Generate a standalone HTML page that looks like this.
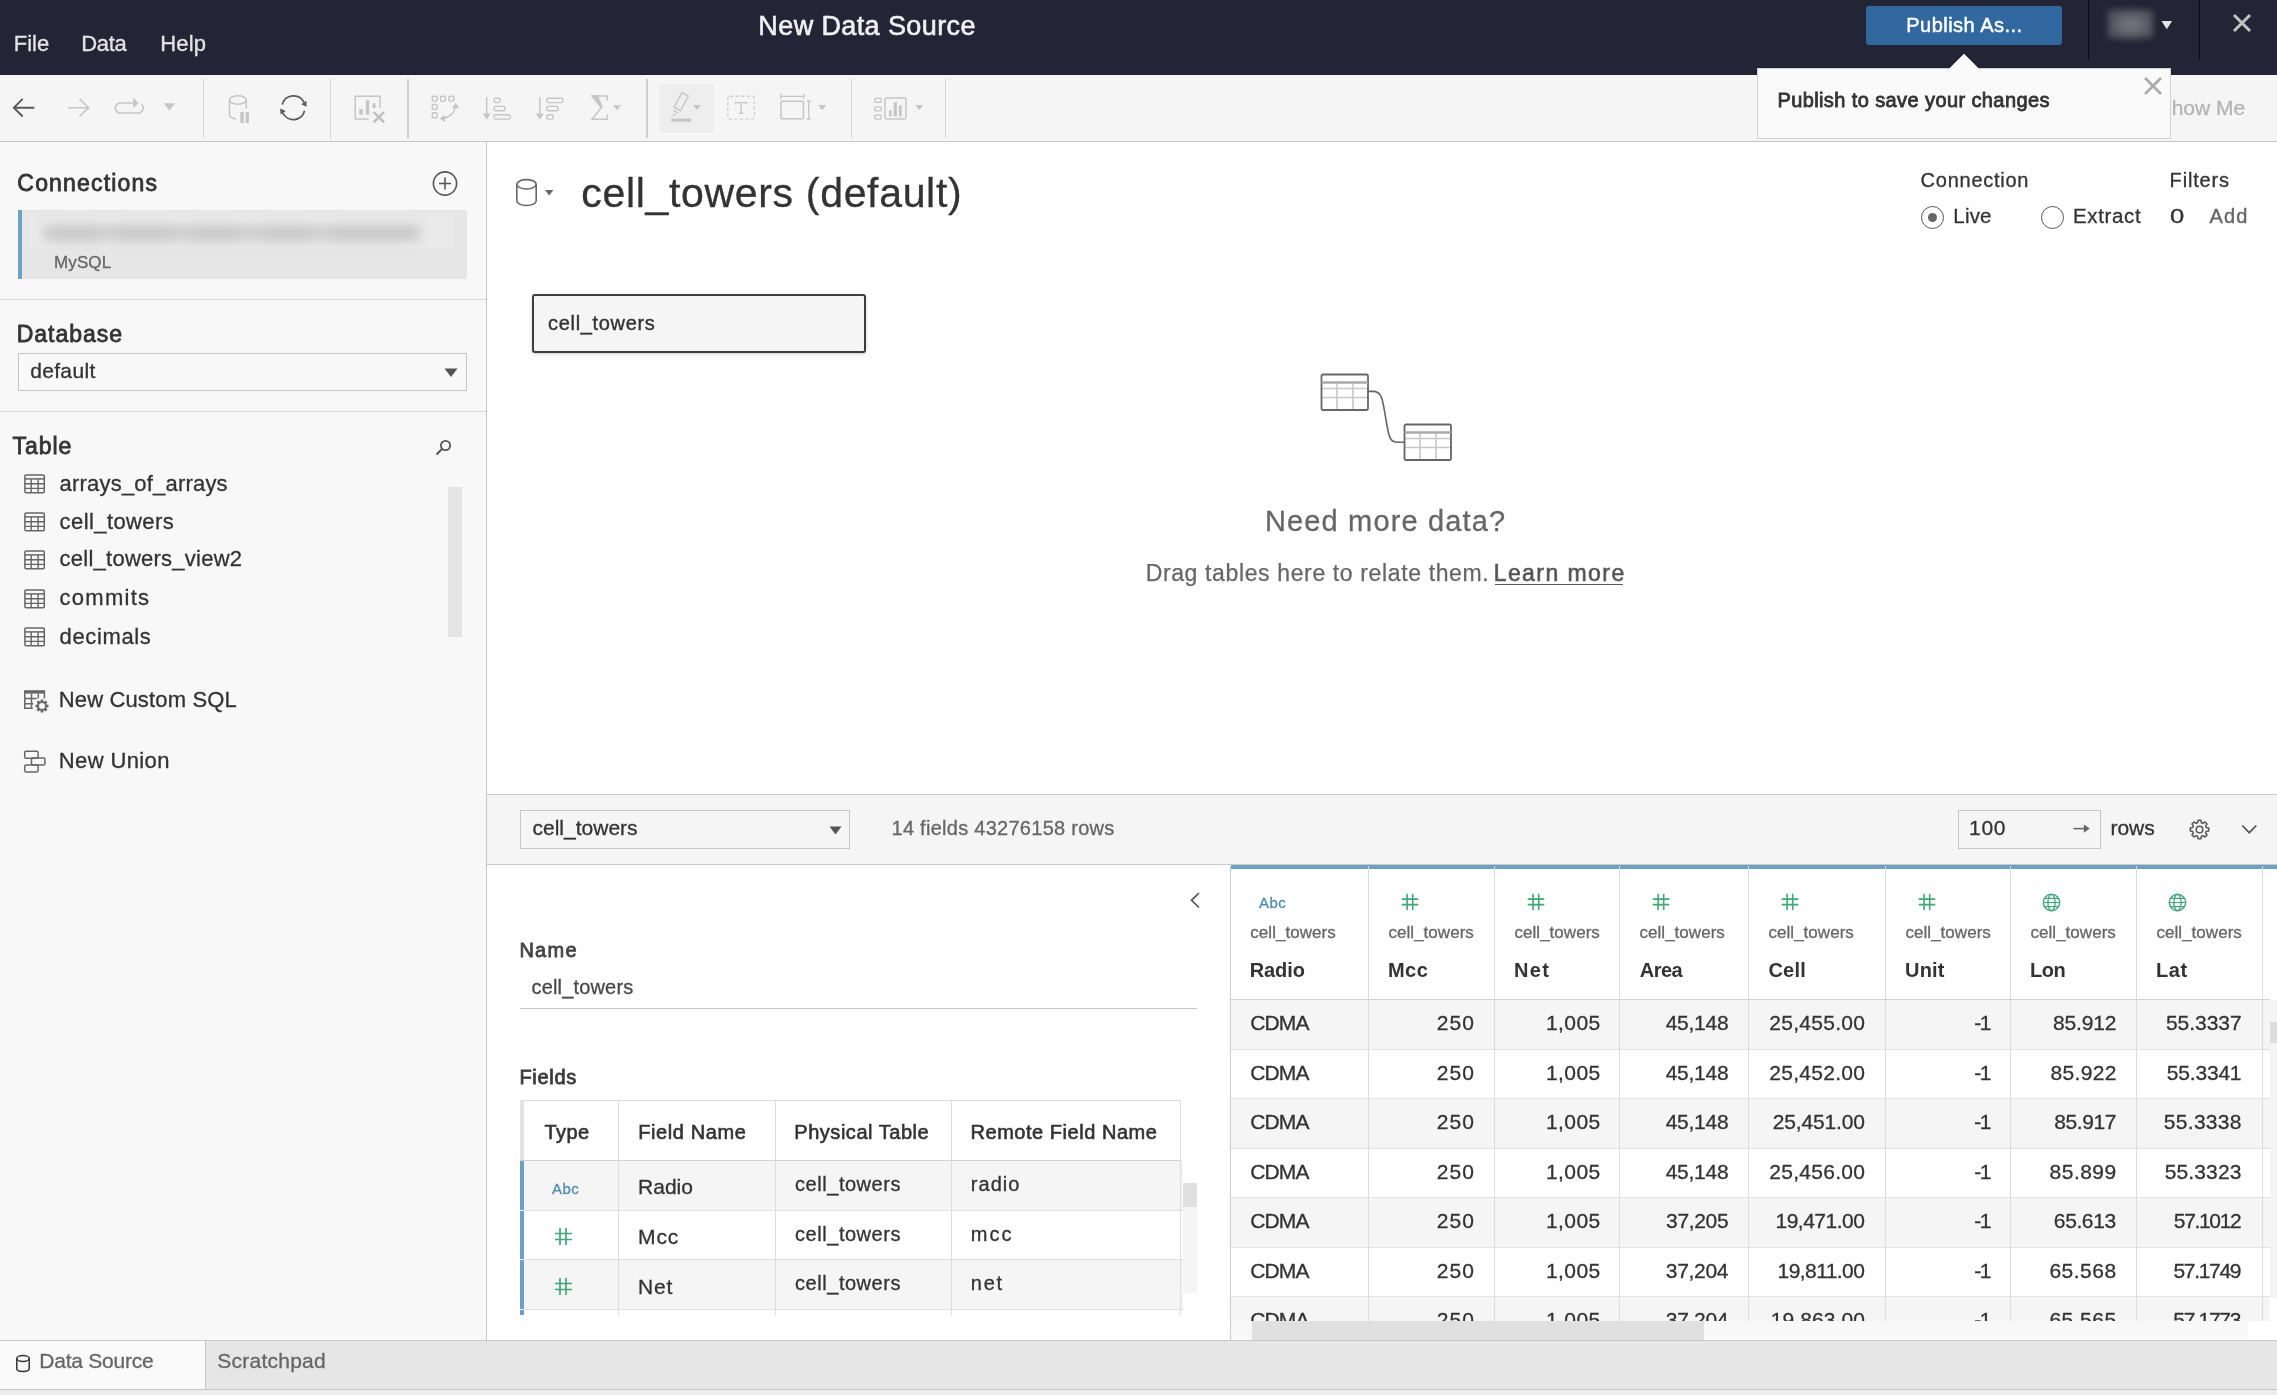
<!DOCTYPE html>
<html lang="en"><head><meta charset="utf-8"><title>New Data Source</title>
<style>
html,body{margin:0;padding:0;}
body{width:2277px;height:1395px;position:relative;overflow:hidden;background:#fff;font-family:"Liberation Sans",sans-serif;color:#333;}
.t{position:absolute;white-space:nowrap;line-height:1;}
#w{position:absolute;left:0;top:0;width:2277px;height:1395px;will-change:transform;}
.b{position:absolute;box-sizing:border-box;}
</style></head><body><div id="w">
<div class="b" style="left:0px;top:0px;width:2277px;height:75px;background:#232536;"></div>
<div class="b" style="left:0px;top:75px;width:2277px;height:66px;background:#f5f5f5;"></div>
<div class="b" style="left:0px;top:141px;width:2277px;height:1px;background:#c6c6c6;"></div>
<div class="b" style="left:0px;top:142px;width:486px;height:1198px;background:#f8f8f8;"></div>
<div class="b" style="left:486px;top:142px;width:1px;height:1198px;background:#c4c4c4;"></div>
<span class="t" style="left:13.74px;top:33px;font-size:22px;color:#e4e4e4;letter-spacing:-0.023px;-webkit-text-stroke:0.3px #e4e4e4;">File</span>
<span class="t" style="left:81.24px;top:33px;font-size:22px;color:#e4e4e4;letter-spacing:-0.320px;-webkit-text-stroke:0.3px #e4e4e4;">Data</span>
<span class="t" style="left:160.24px;top:33px;font-size:22px;color:#e4e4e4;letter-spacing:0.177px;-webkit-text-stroke:0.3px #e4e4e4;">Help</span>
<span class="t" style="left:758.34px;top:13px;font-size:27px;color:#f0f0f0;letter-spacing:0.395px;-webkit-text-stroke:0.6px #f0f0f0;">New Data Source</span>
<div class="b" style="left:1866px;top:6px;width:196px;height:39px;background:#31689f;border-radius:3px;"></div>
<span class="t" style="left:1906.20px;top:15px;font-size:20px;color:#fff;letter-spacing:0.492px;-webkit-text-stroke:0.5px #fff;">Publish As...</span>
<div class="b" style="left:2088px;top:0px;width:1.300000000000182px;height:59px;background:#0b0c12;"></div>
<div class="b" style="left:2199px;top:0px;width:1.300000000000182px;height:59px;background:#0b0c12;"></div>
<div class="b" style="left:2108px;top:10px;width:45px;height:28px;background:#4f505c;filter:blur(3px);border-radius:2px;"></div>
<div class="b" style="left:2116px;top:16px;width:30px;height:17px;background:#74757f;filter:blur(6px);border-radius:8px;"></div>
<svg class="b" style="left:2161px;top:20px;" width="12" height="10" viewBox="0 0 12 10" fill="none"><path d="M0.5 1h10.6L5.8 9.2z" fill="#e4e4e4"/></svg>
<svg class="b" style="left:2231px;top:12px;" width="22" height="22" viewBox="0 0 22 22" fill="none"><path d="M3 3L19 19M19 3L3 19" stroke="#c2c2c2" stroke-width="3"/></svg>
<div class="b" style="left:203px;top:79px;width:1px;height:59px;background:#d4d4d4;"></div>
<div class="b" style="left:330px;top:79px;width:1px;height:59px;background:#d4d4d4;"></div>
<div class="b" style="left:407px;top:79px;width:2px;height:59px;background:#d0d0d0;"></div>
<div class="b" style="left:646px;top:79px;width:2px;height:59px;background:#d0d0d0;"></div>
<div class="b" style="left:851px;top:79px;width:1px;height:59px;background:#d4d4d4;"></div>
<div class="b" style="left:945px;top:79px;width:1px;height:59px;background:#d4d4d4;"></div>
<div class="b" style="left:659px;top:84px;width:55px;height:49px;background:#eeeeee;border-radius:2px;"></div>
<svg class="b" style="left:0px;top:75px;" width="960" height="66" viewBox="0 75 960 66" fill="none"><path d="M34.3 107.7H14M22.7 98.9L13.8 107.7L22.7 116.5" stroke="#5a5a5a" stroke-width="1.9"/><path d="M68 107.7H88.5M79.5 98.9L88.6 107.7L79.5 116.5" stroke="#c6c6c6" stroke-width="1.6"/><path d="M133 102.9H120.5a5.1 5.1 0 0 0 0 10.2H138a5.2 5.2 0 0 0 3.6-9" stroke="#c6c6c6" stroke-width="1.5"/><path d="M133.2 97.6L138.6 102.9L133.2 108.2z" fill="#c6c6c6"/><path d="M163.8 103.3H175L169.4 110.7z" fill="#c6c6c6"/><ellipse cx="237.9" cy="100" rx="8.4" ry="4.2" stroke="#c6c6c6" stroke-width="1.5"/><path d="M229.5 100v14.6c0 2.2 2.6 3.8 6.5 4.4M246.3 100v8.5" stroke="#c6c6c6" stroke-width="1.5"/><path d="M240.3 112h3.5v11h-3.5zM245.6 112h3.3v11h-3.3z" fill="#c6c6c6"/><path d="M282.3 104.6A11.6 11.6 0 0 1 304 102.5" stroke="#5a5a5a" stroke-width="1.7"/><path d="M304.6 110.8A11.6 11.6 0 0 1 282.8 112.9" stroke="#5a5a5a" stroke-width="1.7"/><path d="M306.3 100.8L306.6 106.8L301.2 104.2z" fill="#5a5a5a"/><path d="M280.6 114.5L280.2 108.4L285.8 111z" fill="#5a5a5a"/><path d="M380 108V96.3H355.2v22.6h13.5" stroke="#c6c6c6" stroke-width="1.5"/><path d="M359.3 109h3.5v5.7h-3.5zM365.9 100.2h3.3v14.5h-3.3zM372.5 103.3h3.1v4.8h-3.1z" fill="#c6c6c6"/><path d="M373.6 112l10.5 10.3M384.1 112L373.6 122.3" stroke="#bdbdbd" stroke-width="2.4"/><rect x="432.20000000000005" y="96.19999999999999" width="4.9" height="4.9" rx="1.2" stroke="#c6c6c6" stroke-width="1.4"/><rect x="440.5" y="96.19999999999999" width="4.9" height="4.9" rx="1.2" stroke="#c6c6c6" stroke-width="1.4"/><rect x="448.90000000000003" y="96.19999999999999" width="4.9" height="4.9" rx="1.2" stroke="#c6c6c6" stroke-width="1.4"/><rect x="432.20000000000005" y="104.5" width="4.9" height="4.9" rx="1.2" stroke="#c6c6c6" stroke-width="1.4"/><rect x="432.20000000000005" y="112.8" width="4.9" height="4.9" rx="1.2" stroke="#c6c6c6" stroke-width="1.4"/><path d="M455.4 106.5C454.5 113 449.5 117.5 443.5 118.2" stroke="#c6c6c6" stroke-width="1.5"/><path d="M455.6 102.8L459.3 108.3L452 108z" fill="#c6c6c6"/><path d="M439.6 118.6L444.8 115L444.9 122.3z" fill="#c6c6c6"/><path d="M486.7 96.9V114" stroke="#c6c6c6" stroke-width="1.5"/><path d="M482.7 113.6h8L486.7 119.8z" fill="#c6c6c6"/><rect x="494.09999999999997" y="98.2" width="6.0" height="4.4" rx="1.6" stroke="#c6c6c6" stroke-width="1.4"/><rect x="494.09999999999997" y="106.4" width="10.799999999999999" height="4.4" rx="1.6" stroke="#c6c6c6" stroke-width="1.4"/><rect x="494.09999999999997" y="114.7" width="16.1" height="4.4" rx="1.6" stroke="#c6c6c6" stroke-width="1.4"/><path d="M539.8 96.9V114" stroke="#c6c6c6" stroke-width="1.5"/><path d="M535.8 113.6h8L539.8 119.8z" fill="#c6c6c6"/><rect x="546.8000000000001" y="98.2" width="16.1" height="4.4" rx="1.6" stroke="#c6c6c6" stroke-width="1.4"/><rect x="546.8000000000001" y="106.4" width="11.2" height="4.4" rx="1.6" stroke="#c6c6c6" stroke-width="1.4"/><rect x="546.8000000000001" y="114.7" width="6.4" height="4.4" rx="1.6" stroke="#c6c6c6" stroke-width="1.4"/><path d="M607.2 100.5V96H592L601.3 107.5L592 119.2H607.2V114.6" stroke="#c6c6c6" stroke-width="1.5"/><path d="M590.8 95.3H598L603 107.5H601z" fill="#c6c6c6"/><path d="M613.2 105.3H621L617.1 110.2z" fill="#c6c6c6"/><path d="M681.9 92.6L688.4 96.1L680.6 110.6L674.1 107.1z" stroke="#c6c6c6" stroke-width="1.4"/><path d="M673.6 110.7L678.3 113.2M672.8 114.3L675.3 115.6" stroke="#c6c6c6" stroke-width="1.4"/><path d="M671.2 118.5H691V121.7H671.2z" fill="#c6c6c6"/><path d="M693.1 105.1H700.9L697 110.3z" fill="#c6c6c6"/><rect x="727.8" y="96.3" width="26.5" height="22.8" rx="2" stroke="#d2d2d2" stroke-width="1.4" stroke-dasharray="3.4 2.2"/><path d="M735.6 104.5V102.6H746.6V104.5M741.1 102.6V113.3M738.6 113.4H743.6" stroke="#c6c6c6" stroke-width="1.4"/><path d="M780.8 96.3H803.9M780.9 93.7V98.9M803.8 93.7V98.9" stroke="#c6c6c6" stroke-width="1.3"/><rect x="781" y="101.2" width="22.4" height="17.6" rx="1" stroke="#c6c6c6" stroke-width="1.5"/><path d="M808.7 100.8V119.2M806.5 100.9H811.1M806.5 119.1H811.1" stroke="#c6c6c6" stroke-width="1.3"/><path d="M818.2 105.1H826.2L822.2 110.3z" fill="#c6c6c6"/><rect x="874.7" y="98.39999999999999" width="6.4" height="4" rx="1" stroke="#c6c6c6" stroke-width="1.3"/><rect x="874.7" y="106.8" width="6.4" height="4" rx="1" stroke="#c6c6c6" stroke-width="1.3"/><rect x="874.7" y="115.1" width="6.4" height="4" rx="1" stroke="#c6c6c6" stroke-width="1.3"/><rect x="885" y="98.1" width="21" height="20.8" rx="1.4" stroke="#c6c6c6" stroke-width="1.5"/><path d="M889 110.3h2.7v6.3H889zM893.7 102.2h3.2v14.4h-3.2zM898.9 105.4h2.8v11.2h-2.8z" fill="#c6c6c6"/><path d="M915.5 105.1H923.2L919.3 110.3z" fill="#c6c6c6"/></svg>
<span class="t" style="left:2157.68px;top:97px;font-size:21px;color:#b4b4b4;-webkit-text-stroke:0.3px #b4b4b4;">Show Me</span>
<div class="b" style="left:1757px;top:68px;width:414px;height:71px;background:#fafafa;border:1px solid #d2d2d2;"></div>
<svg class="b" style="left:1948px;top:53px;" width="32" height="17" viewBox="0 0 32 17" fill="none"><path d="M1 16.2L16 1L31 16.2" fill="#fafafa" stroke="#d8d8d8" stroke-width="1"/><path d="M1.5 16.3H30.5" stroke="#fafafa" stroke-width="2"/></svg>
<span class="t" style="left:1777.40px;top:90px;font-size:20px;color:#333;letter-spacing:0.400px;-webkit-text-stroke:0.8px #333;">Publish to save your changes</span>
<svg class="b" style="left:2142px;top:75px;" width="22" height="22" viewBox="0 0 22 22" fill="none"><path d="M3 3L19 19M19 3L3 19" stroke="#aaa" stroke-width="2.7"/></svg>
<span class="t" style="left:17.35px;top:172px;font-size:23px;color:#333;letter-spacing:1.188px;-webkit-text-stroke:0.8px #333;">Connections</span>
<svg class="b" style="left:430.6px;top:170px;" width="28" height="28" viewBox="0 0 28 28" fill="none"><circle cx="14" cy="13.5" r="11.6" stroke="#555" stroke-width="1.6"/><path d="M14 7.5v12M8 13.5h12" stroke="#555" stroke-width="1.6"/></svg>
<div class="b" style="left:18px;top:210px;width:449px;height:69px;background:#e6e6e6;"></div>
<div class="b" style="left:18px;top:210px;width:4px;height:69px;background:#6ba1c6;"></div>
<div class="b" style="left:29px;top:216px;width:425px;height:32px;background:#e9e9e9;"></div>
<div class="b" style="left:42px;top:225px;width:378px;height:16px;background:#d0d0d0;filter:blur(5px);border-radius:8px;"></div>
<div class="b" style="left:50px;top:228px;width:50px;height:10px;background:#c4c4c4;filter:blur(6px);border-radius:8px;opacity:.55;"></div>
<div class="b" style="left:115px;top:228px;width:60px;height:10px;background:#c4c4c4;filter:blur(6px);border-radius:8px;opacity:.55;"></div>
<div class="b" style="left:190px;top:228px;width:50px;height:10px;background:#c4c4c4;filter:blur(6px);border-radius:8px;opacity:.55;"></div>
<div class="b" style="left:262px;top:228px;width:50px;height:10px;background:#c4c4c4;filter:blur(6px);border-radius:8px;opacity:.55;"></div>
<div class="b" style="left:330px;top:228px;width:88px;height:10px;background:#c4c4c4;filter:blur(6px);border-radius:8px;opacity:.55;"></div>
<span class="t" style="left:53.94px;top:254px;font-size:17px;color:#666;letter-spacing:0.144px;-webkit-text-stroke:0.3px #666;">MySQL</span>
<div class="b" style="left:0px;top:299px;width:486px;height:1px;background:#d6d6d6;"></div>
<span class="t" style="left:16.66px;top:323px;font-size:23px;color:#333;letter-spacing:0.991px;-webkit-text-stroke:0.8px #333;">Database</span>
<div class="b" style="left:18px;top:353px;width:449px;height:38px;background:#f9f9f9;border:1px solid #c6c6c6;"></div>
<span class="t" style="left:30.16px;top:360px;font-size:21px;color:#333;letter-spacing:0.341px;-webkit-text-stroke:0.3px #333;">default</span>
<svg class="b" style="left:444px;top:367.6px;" width="14" height="10" viewBox="0 0 14 10" fill="none"><path d="M0.5 0.5h13L7 9z" fill="#555"/></svg>
<div class="b" style="left:0px;top:411px;width:486px;height:1px;background:#d6d6d6;"></div>
<span class="t" style="left:12.54px;top:435px;font-size:23px;color:#333;letter-spacing:0.956px;-webkit-text-stroke:0.8px #333;">Table</span>
<svg class="b" style="left:434px;top:438px;" width="20" height="20" viewBox="0 0 20 20" fill="none"><circle cx="11.5" cy="7.5" r="4.6" stroke="#555" stroke-width="1.8"/><path d="M8.2 10.8L2.5 16.5" stroke="#555" stroke-width="2"/></svg>
<span class="t" style="left:59.62px;top:473px;font-size:22px;color:#333;letter-spacing:0.196px;-webkit-text-stroke:0.3px #333;">arrays_of_arrays</span>
<svg class="b" style="left:24px;top:473.8px;" width="22" height="20" viewBox="0 0 22 20" fill="none"><rect x="0.9" y="0.9" width="19.4" height="17.8" rx="1.2" stroke="#666" stroke-width="1.5"/><path d="M1 4.9h19.3" stroke="#666" stroke-width="1.5"/><path d="M1 9.7h19.3M1 14.4h19.3M7.2 5v13.6M14.1 5v13.6" stroke="#666" stroke-width="1.4"/></svg>
<span class="t" style="left:59.62px;top:511px;font-size:22px;color:#333;letter-spacing:0.405px;-webkit-text-stroke:0.3px #333;">cell_towers</span>
<svg class="b" style="left:24px;top:511.8px;" width="22" height="20" viewBox="0 0 22 20" fill="none"><rect x="0.9" y="0.9" width="19.4" height="17.8" rx="1.2" stroke="#666" stroke-width="1.5"/><path d="M1 4.9h19.3" stroke="#666" stroke-width="1.5"/><path d="M1 9.7h19.3M1 14.4h19.3M7.2 5v13.6M14.1 5v13.6" stroke="#666" stroke-width="1.4"/></svg>
<span class="t" style="left:59.62px;top:548px;font-size:22px;color:#333;letter-spacing:0.247px;-webkit-text-stroke:0.3px #333;">cell_towers_view2</span>
<svg class="b" style="left:24px;top:549.8px;" width="22" height="20" viewBox="0 0 22 20" fill="none"><rect x="0.9" y="0.9" width="19.4" height="17.8" rx="1.2" stroke="#666" stroke-width="1.5"/><path d="M1 4.9h19.3" stroke="#666" stroke-width="1.5"/><path d="M1 9.7h19.3M1 14.4h19.3M7.2 5v13.6M14.1 5v13.6" stroke="#666" stroke-width="1.4"/></svg>
<span class="t" style="left:59.62px;top:587px;font-size:22px;color:#333;letter-spacing:1.252px;-webkit-text-stroke:0.3px #333;">commits</span>
<svg class="b" style="left:24px;top:588.8px;" width="22" height="20" viewBox="0 0 22 20" fill="none"><rect x="0.9" y="0.9" width="19.4" height="17.8" rx="1.2" stroke="#666" stroke-width="1.5"/><path d="M1 4.9h19.3" stroke="#666" stroke-width="1.5"/><path d="M1 9.7h19.3M1 14.4h19.3M7.2 5v13.6M14.1 5v13.6" stroke="#666" stroke-width="1.4"/></svg>
<span class="t" style="left:59.62px;top:626px;font-size:22px;color:#333;letter-spacing:0.623px;-webkit-text-stroke:0.3px #333;">decimals</span>
<svg class="b" style="left:24px;top:626.8px;" width="22" height="20" viewBox="0 0 22 20" fill="none"><rect x="0.9" y="0.9" width="19.4" height="17.8" rx="1.2" stroke="#666" stroke-width="1.5"/><path d="M1 4.9h19.3" stroke="#666" stroke-width="1.5"/><path d="M1 9.7h19.3M1 14.4h19.3M7.2 5v13.6M14.1 5v13.6" stroke="#666" stroke-width="1.4"/></svg>
<div class="b" style="left:448px;top:487px;width:14px;height:150px;background:#e4e4e4;"></div>
<span class="t" style="left:58.74px;top:689px;font-size:22px;color:#333;letter-spacing:0.148px;-webkit-text-stroke:0.3px #333;">New Custom SQL</span>
<span class="t" style="left:58.74px;top:750px;font-size:22px;color:#333;letter-spacing:0.389px;-webkit-text-stroke:0.3px #333;">New Union</span>
<svg class="b" style="left:23px;top:688px;" width="26" height="26" viewBox="0 0 26 26" fill="none"><path d="M1.4 2.2h20.4v3.4H1.4z" fill="#666"/><path d="M1.8 2.5v17.8h8M21.4 2.5v8M1.8 10.6h12M1.8 15.7h8.5M8.5 5.6v14.7M15.3 5.6v5" stroke="#666" stroke-width="1.5"/><path d="M17.43 13.68L17.74 11.52L20.26 11.52L20.57 13.68L20.94 13.83L22.69 12.53L24.47 14.31L23.17 16.06L23.32 16.43L25.48 16.74L25.48 19.26L23.32 19.57L23.17 19.94L24.47 21.69L22.69 23.47L20.94 22.17L20.57 22.32L20.26 24.48L17.74 24.48L17.43 22.32L17.06 22.17L15.31 23.47L13.53 21.69L14.83 19.94L14.68 19.57L12.52 19.26L12.52 16.74L14.68 16.43L14.83 16.06L13.53 14.31L15.31 12.53L17.06 13.83Z" fill="#666"/><circle cx="19" cy="18" r="3" fill="#f8f8f8"/></svg>
<svg class="b" style="left:23px;top:749px;" width="24" height="24" viewBox="0 0 24 24" fill="none"><rect x="1.7" y="2.3" width="13.4" height="7" rx="1.3" stroke="#666" stroke-width="1.5"/><rect x="8.5" y="9.1" width="13.4" height="7" rx="1.3" stroke="#666" stroke-width="1.5"/><rect x="1.7" y="15.9" width="13.4" height="7" rx="1.3" stroke="#666" stroke-width="1.5"/></svg>
<svg class="b" style="left:514px;top:177px;" width="26" height="32" viewBox="0 0 26 32" fill="none"><ellipse cx="12.5" cy="7.3" rx="9.7" ry="4.7" stroke="#666" stroke-width="1.6"/><path d="M2.8 7.3v16.5c0 2.6 4.3 4.7 9.7 4.7s9.7-2.1 9.7-4.7V7.3" stroke="#666" stroke-width="1.6"/></svg>
<svg class="b" style="left:545px;top:190px;" width="9" height="6" viewBox="0 0 9 6" fill="none"><path d="M0 0h8.4L4.2 5.6z" fill="#666"/></svg>
<span class="t" style="left:581.36px;top:173px;font-size:41px;color:#333;letter-spacing:0.668px;-webkit-text-stroke:0.3px #333;">cell_towers (default)</span>
<span class="t" style="left:1920.60px;top:170px;font-size:20px;color:#333;letter-spacing:0.744px;-webkit-text-stroke:0.3px #333;">Connection</span>
<span class="t" style="left:2169.60px;top:170px;font-size:20px;color:#333;letter-spacing:0.817px;-webkit-text-stroke:0.3px #333;">Filters</span>
<div class="b" style="left:1921px;top:206px;width:23px;height:23px;border:1.4px solid #555;border-radius:50%;background:#fff"></div>
<div class="b" style="left:1928px;top:213px;width:9px;height:9px;border-radius:50%;background:#666"></div>
<div class="b" style="left:2041px;top:206px;width:23px;height:23px;border:1.4px solid #555;border-radius:50%;background:#fff"></div>
<span class="t" style="left:1953.36px;top:206px;font-size:20.5px;color:#333;letter-spacing:0.182px;-webkit-text-stroke:0.3px #333;">Live</span>
<span class="t" style="left:2072.96px;top:206px;font-size:20.5px;color:#333;letter-spacing:0.665px;-webkit-text-stroke:0.3px #333;">Extract</span>
<span class="t" style="left:2170.18px;top:206px;font-size:20.5px;color:#333;-webkit-text-stroke:0.3px #333;transform:scaleX(1.25);transform-origin:0 0;">0</span>
<span class="t" style="left:2209.60px;top:206px;font-size:20px;color:#666;letter-spacing:1.150px;-webkit-text-stroke:0.4px #666;">Add</span>
<div class="b" style="left:532px;top:294px;width:334px;height:59px;background:#f5f5f5;border:2px solid #3e3e3e;border-radius:3px;box-shadow:0 1px 3px rgba(0,0,0,.22);"></div>
<span class="t" style="left:548.10px;top:313px;font-size:20px;color:#333;letter-spacing:0.660px;-webkit-text-stroke:0.4px #333;">cell_towers</span>
<svg class="b" style="left:1319.6px;top:373px;" width="50" height="39" viewBox="0 0 50 39" fill="none"><path d="M2 15.5h46M2 24.5h46M17 8.5v28M33 8.5v28" stroke="#c8c8c8" stroke-width="1.6"/><rect x="1.5" y="1.5" width="46.5" height="35.5" rx="1.5" stroke="#666" stroke-width="1.8"/><path d="M1.5 9.5h46.5" stroke="#aaa" stroke-width="2.7"/></svg>
<svg class="b" style="left:1402.7px;top:422.8px;" width="50" height="39" viewBox="0 0 50 39" fill="none"><path d="M2 15.5h46M2 24.5h46M17 8.5v28M33 8.5v28" stroke="#c8c8c8" stroke-width="1.6"/><rect x="1.5" y="1.5" width="46.5" height="35.5" rx="1.5" stroke="#666" stroke-width="1.8"/><path d="M1.5 9.5h46.5" stroke="#aaa" stroke-width="2.7"/></svg>
<svg class="b" style="left:1360px;top:380px;" width="50" height="70" viewBox="1360 380 50 70" fill="none"><path d="M1367.5 391.4H1373C1380.5 391.4 1382.3 397 1384.3 410L1387.3 427C1389.3 439.5 1391.5 442.2 1398 442.2H1404.5" stroke="#666" stroke-width="1.6"/></svg>
<span class="t" style="left:1264.98px;top:507px;font-size:29px;color:#666;letter-spacing:1.144px;-webkit-text-stroke:0.3px #666;">Need more data?</span>
<span class="t" style="left:1145.66px;top:562px;font-size:23px;color:#666;letter-spacing:0.633px;-webkit-text-stroke:0.25px #666;">Drag tables here to relate them.</span>
<span class="t" style="left:1493.66px;top:562px;font-size:23px;color:#555;letter-spacing:1.437px;-webkit-text-stroke:0.6px #555;">Learn more</span>
<div class="b" style="left:1495px;top:583.6px;width:128px;height:1.7999999999999545px;background:#5a5a5a;"></div>
<div class="b" style="left:487px;top:794px;width:1790px;height:71px;background:#f5f5f5;border-top:1px solid #cacaca;border-bottom:1px solid #cacaca;"></div>
<div class="b" style="left:520px;top:810px;width:330px;height:39px;background:#f5f5f5;border:1px solid #c6c6c6;"></div>
<span class="t" style="left:532.46px;top:817px;font-size:21px;color:#333;letter-spacing:0.008px;-webkit-text-stroke:0.3px #333;">cell_towers</span>
<svg class="b" style="left:829px;top:826px;" width="13" height="9" viewBox="0 0 13 9" fill="none"><path d="M0.5 0.5h12L6.5 8.5z" fill="#555"/></svg>
<span class="t" style="left:891.50px;top:818px;font-size:20px;color:#666;letter-spacing:0.273px;-webkit-text-stroke:0.3px #666;">14 fields 43276158 rows</span>
<div class="b" style="left:1958px;top:810px;width:143px;height:39px;background:#f5f5f5;border:1px solid #c6c6c6;"></div>
<span class="t" style="left:1969.12px;top:817px;font-size:21px;color:#333;letter-spacing:0.622px;-webkit-text-stroke:0.3px #333;">100</span>
<svg class="b" style="left:2072px;top:821px;" width="20" height="16" viewBox="0 0 20 16" fill="none"><path d="M1.4 7.6h11" stroke="#666" stroke-width="1.5"/><path d="M11.8 3.4L17.8 7.6L11.8 11.8z" fill="#666"/></svg>
<svg class="b" style="left:2189px;top:819px;" width="22" height="22" viewBox="0 0 22 22" fill="none"><path d="M8.57 3.77L9.05 1.31L11.95 1.31L12.43 3.77L13.89 4.38L15.97 2.98L18.02 5.03L16.62 7.11L17.23 8.57L19.69 9.05L19.69 11.95L17.23 12.43L16.62 13.89L18.02 15.97L15.97 18.02L13.89 16.62L12.43 17.23L11.95 19.69L9.05 19.69L8.57 17.23L7.11 16.62L5.03 18.02L2.98 15.97L4.38 13.89L3.77 12.43L1.31 11.95L1.31 9.05L3.77 8.57L4.38 7.11L2.98 5.03L5.03 2.98L7.11 4.38Z" stroke="#555" stroke-width="1.5" stroke-linejoin="round"/><circle cx="10.5" cy="10.5" r="3.3" stroke="#555" stroke-width="1.5"/></svg>
<span class="t" style="left:2110.44px;top:817px;font-size:21px;color:#333;-webkit-text-stroke:0.3px #333;">rows</span>
<svg class="b" style="left:2241px;top:822px;" width="18" height="14" viewBox="0 0 18 14" fill="none"><path d="M1.3 3.5l7 7.2l7-7.2" stroke="#555" stroke-width="1.7"/></svg>
<div class="b" style="left:1230px;top:866px;width:1px;height:474px;background:#cacaca;"></div>
<svg class="b" style="left:1188px;top:891px;" width="14" height="18" viewBox="0 0 14 18" fill="none"><path d="M11 2L3.5 9.3L11 16.5" stroke="#555" stroke-width="1.7"/></svg>
<span class="t" style="left:519.40px;top:940px;font-size:20px;color:#444;letter-spacing:1.267px;-webkit-text-stroke:0.8px #444;">Name</span>
<span class="t" style="left:531.50px;top:977px;font-size:20px;color:#484848;letter-spacing:0.170px;-webkit-text-stroke:0.3px #484848;">cell_towers</span>
<div class="b" style="left:520px;top:1008px;width:677px;height:1px;background:#c8c8c8;"></div>
<span class="t" style="left:519.40px;top:1067px;font-size:20px;color:#3c3c3c;letter-spacing:0.700px;-webkit-text-stroke:0.8px #3c3c3c;">Fields</span>
<div class="b" style="left:520px;top:1100px;width:661px;height:215px;overflow:hidden;border-top:1px solid #dcdcdc;"></div>
<div class="b" style="left:520px;top:1100px;width:4px;height:61px;background:#e2e2e2;"></div>
<div class="b" style="left:524px;top:1161px;width:659px;height:49px;background:#f5f5f5;"></div>
<div class="b" style="left:524px;top:1259px;width:659px;height:50px;background:#f5f5f5;"></div>
<div class="b" style="left:520px;top:1161px;width:4px;height:154px;background:#6ba1c6;"></div>
<div class="b" style="left:520px;top:1160px;width:661px;height:1px;background:#d0d0d0;"></div>
<div class="b" style="left:520px;top:1210px;width:663px;height:1px;background:#e0e0e0;"></div>
<div class="b" style="left:520px;top:1259px;width:663px;height:1px;background:#e0e0e0;"></div>
<div class="b" style="left:520px;top:1309px;width:663px;height:1px;background:#e0e0e0;"></div>
<div class="b" style="left:618px;top:1100px;width:1px;height:215px;background:#dcdcdc;"></div>
<div class="b" style="left:775px;top:1100px;width:1px;height:215px;background:#dcdcdc;"></div>
<div class="b" style="left:951px;top:1100px;width:1px;height:215px;background:#dcdcdc;"></div>
<div class="b" style="left:1180px;top:1100px;width:1px;height:215px;background:#dcdcdc;"></div>
<div class="b" style="left:520px;top:1210px;width:4px;height:1px;background:#fff;"></div>
<div class="b" style="left:520px;top:1259px;width:4px;height:1px;background:#fff;"></div>
<div class="b" style="left:520px;top:1309px;width:4px;height:1px;background:#fff;"></div>
<span class="t" style="left:544.50px;top:1122px;font-size:20px;color:#333;letter-spacing:0.433px;-webkit-text-stroke:0.6px #333;">Type</span>
<span class="t" style="left:638.20px;top:1122px;font-size:20px;color:#333;letter-spacing:0.611px;-webkit-text-stroke:0.6px #333;">Field Name</span>
<span class="t" style="left:794.30px;top:1122px;font-size:20px;color:#333;letter-spacing:0.531px;-webkit-text-stroke:0.6px #333;">Physical Table</span>
<span class="t" style="left:970.50px;top:1122px;font-size:20px;color:#333;letter-spacing:0.537px;-webkit-text-stroke:0.6px #333;">Remote Field Name</span>
<span class="t" style="left:552.10px;top:1181px;font-size:15px;color:#4e8db3;letter-spacing:0.350px;-webkit-text-stroke:0.3px #4e8db3;">Abc</span>
<svg class="b" style="left:554px;top:1227.3px;" width="19" height="19" viewBox="0 0 19 19" fill="none"><path d="M6 1v17M12 1v17M1 6.5h17M1 12.5h17" stroke="#3fa778" stroke-width="1.7"/></svg>
<svg class="b" style="left:554px;top:1276.8px;" width="19" height="19" viewBox="0 0 19 19" fill="none"><path d="M6 1v17M12 1v17M1 6.5h17M1 12.5h17" stroke="#3fa778" stroke-width="1.7"/></svg>
<span class="t" style="left:638.12px;top:1176px;font-size:21px;color:#333;letter-spacing:-0.023px;-webkit-text-stroke:0.3px #333;">Radio</span>
<span class="t" style="left:795.10px;top:1174px;font-size:20px;color:#333;letter-spacing:0.530px;-webkit-text-stroke:0.3px #333;">cell_towers</span>
<span class="t" style="left:970.80px;top:1174px;font-size:20px;color:#333;letter-spacing:1.050px;-webkit-text-stroke:0.3px #333;">radio</span>
<span class="t" style="left:638.12px;top:1226px;font-size:21px;color:#333;letter-spacing:0.835px;-webkit-text-stroke:0.3px #333;">Mcc</span>
<span class="t" style="left:795.10px;top:1224px;font-size:20px;color:#333;letter-spacing:0.530px;-webkit-text-stroke:0.3px #333;">cell_towers</span>
<span class="t" style="left:970.80px;top:1224px;font-size:20px;color:#333;letter-spacing:2.050px;-webkit-text-stroke:0.3px #333;">mcc</span>
<span class="t" style="left:638.12px;top:1276px;font-size:21px;color:#333;letter-spacing:0.765px;-webkit-text-stroke:0.3px #333;">Net</span>
<span class="t" style="left:795.10px;top:1273px;font-size:20px;color:#333;letter-spacing:0.530px;-webkit-text-stroke:0.3px #333;">cell_towers</span>
<span class="t" style="left:970.80px;top:1273px;font-size:20px;color:#333;letter-spacing:1.750px;-webkit-text-stroke:0.3px #333;">net</span>
<div class="b" style="left:1183px;top:1183px;width:14px;height:110px;background:#f5f5f5;"></div>
<div class="b" style="left:1183px;top:1183px;width:14px;height:24px;background:#e0e0e0;"></div>
<div class="b" style="left:1231px;top:865px;width:1046px;height:4px;background:#6ba1c6;"></div>
<div class="b" style="left:1231px;top:999px;width:1039px;height:50px;background:#f5f5f5;"></div>
<div class="b" style="left:1231px;top:999px;width:1039px;height:1px;background:#d2d2d2;"></div>
<div class="b" style="left:1231px;top:1049px;width:1039px;height:49px;background:#fff;"></div>
<div class="b" style="left:1231px;top:1049px;width:1039px;height:1px;background:#e2e2e2;"></div>
<div class="b" style="left:1231px;top:1098px;width:1039px;height:50px;background:#f5f5f5;"></div>
<div class="b" style="left:1231px;top:1098px;width:1039px;height:1px;background:#e2e2e2;"></div>
<div class="b" style="left:1231px;top:1148px;width:1039px;height:49px;background:#fff;"></div>
<div class="b" style="left:1231px;top:1148px;width:1039px;height:1px;background:#e2e2e2;"></div>
<div class="b" style="left:1231px;top:1197px;width:1039px;height:50px;background:#f5f5f5;"></div>
<div class="b" style="left:1231px;top:1197px;width:1039px;height:1px;background:#e2e2e2;"></div>
<div class="b" style="left:1231px;top:1247px;width:1039px;height:49px;background:#fff;"></div>
<div class="b" style="left:1231px;top:1247px;width:1039px;height:1px;background:#e2e2e2;"></div>
<div class="b" style="left:1231px;top:1296px;width:1039px;height:25px;background:#f5f5f5;"></div>
<div class="b" style="left:1231px;top:1296px;width:1039px;height:1px;background:#e2e2e2;"></div>
<div class="b" style="left:1368px;top:866px;width:1px;height:455px;background:#dcdcdc;"></div>
<div class="b" style="left:1494px;top:866px;width:1px;height:455px;background:#dcdcdc;"></div>
<div class="b" style="left:1619px;top:866px;width:1px;height:455px;background:#dcdcdc;"></div>
<div class="b" style="left:1748px;top:866px;width:1px;height:455px;background:#dcdcdc;"></div>
<div class="b" style="left:1885px;top:866px;width:1px;height:455px;background:#dcdcdc;"></div>
<div class="b" style="left:2010px;top:866px;width:1px;height:455px;background:#dcdcdc;"></div>
<div class="b" style="left:2136px;top:866px;width:1px;height:455px;background:#dcdcdc;"></div>
<div class="b" style="left:2262px;top:866px;width:1px;height:455px;background:#dcdcdc;"></div>
<div class="b" style="left:2270px;top:1000px;width:7px;height:298px;background:#f5f5f5;"></div>
<div class="b" style="left:2270px;top:1022px;width:7px;height:21px;background:#dcdcdc;"></div>
<span class="t" style="left:1259.00px;top:895px;font-size:15px;color:#4e8db3;letter-spacing:0.450px;-webkit-text-stroke:0.3px #4e8db3;">Abc</span>
<span class="t" style="left:1250.32px;top:924px;font-size:17px;color:#666;letter-spacing:0.028px;-webkit-text-stroke:0.3px #666;">cell_towers</span>
<span class="t" style="left:1249.70px;top:960px;font-size:20px;color:#333;font-weight:700;letter-spacing:-0.100px;">Radio</span>
<svg class="b" style="left:1400.5px;top:893.3px;" width="18" height="18" viewBox="0 0 18 18" fill="none"><path d="M6.1 0.7v16.3M11.7 0.7v16.3M0.7 6.1h16.6M0.7 11.6h16.6" stroke="#3fa778" stroke-width="1.6"/></svg>
<span class="t" style="left:1388.52px;top:924px;font-size:17px;color:#666;letter-spacing:0.028px;-webkit-text-stroke:0.3px #666;">cell_towers</span>
<span class="t" style="left:1387.90px;top:960px;font-size:20px;color:#333;font-weight:700;letter-spacing:0.500px;">Mcc</span>
<svg class="b" style="left:1526.5px;top:893.3px;" width="18" height="18" viewBox="0 0 18 18" fill="none"><path d="M6.1 0.7v16.3M11.7 0.7v16.3M0.7 6.1h16.6M0.7 11.6h16.6" stroke="#3fa778" stroke-width="1.6"/></svg>
<span class="t" style="left:1514.52px;top:924px;font-size:17px;color:#666;letter-spacing:0.028px;-webkit-text-stroke:0.3px #666;">cell_towers</span>
<span class="t" style="left:1513.90px;top:960px;font-size:20px;color:#333;font-weight:700;letter-spacing:1.350px;">Net</span>
<svg class="b" style="left:1651.5px;top:893.3px;" width="18" height="18" viewBox="0 0 18 18" fill="none"><path d="M6.1 0.7v16.3M11.7 0.7v16.3M0.7 6.1h16.6M0.7 11.6h16.6" stroke="#3fa778" stroke-width="1.6"/></svg>
<span class="t" style="left:1639.52px;top:924px;font-size:17px;color:#666;letter-spacing:0.028px;-webkit-text-stroke:0.3px #666;">cell_towers</span>
<span class="t" style="left:1639.70px;top:960px;font-size:20px;color:#333;font-weight:700;letter-spacing:-0.500px;">Area</span>
<svg class="b" style="left:1780.5px;top:893.3px;" width="18" height="18" viewBox="0 0 18 18" fill="none"><path d="M6.1 0.7v16.3M11.7 0.7v16.3M0.7 6.1h16.6M0.7 11.6h16.6" stroke="#3fa778" stroke-width="1.6"/></svg>
<span class="t" style="left:1768.52px;top:924px;font-size:17px;color:#666;letter-spacing:0.028px;-webkit-text-stroke:0.3px #666;">cell_towers</span>
<span class="t" style="left:1768.40px;top:960px;font-size:20px;color:#333;font-weight:700;letter-spacing:0.267px;">Cell</span>
<svg class="b" style="left:1917.5px;top:893.3px;" width="18" height="18" viewBox="0 0 18 18" fill="none"><path d="M6.1 0.7v16.3M11.7 0.7v16.3M0.7 6.1h16.6M0.7 11.6h16.6" stroke="#3fa778" stroke-width="1.6"/></svg>
<span class="t" style="left:1905.52px;top:924px;font-size:17px;color:#666;letter-spacing:0.028px;-webkit-text-stroke:0.3px #666;">cell_towers</span>
<span class="t" style="left:1905.00px;top:960px;font-size:20px;color:#333;font-weight:700;letter-spacing:0.200px;">Unit</span>
<svg class="b" style="left:2042.0px;top:892.8px;" width="20" height="20" viewBox="0 0 20 20" fill="none"><circle cx="9.5" cy="9.5" r="8.2" stroke="#3fa778" stroke-width="1.4"/><ellipse cx="9.5" cy="9.5" rx="3.6" ry="8.2" stroke="#3fa778" stroke-width="1.3"/><path d="M1.3 9.5h16.4M2.6 5.3h13.8M2.6 13.7h13.8" stroke="#3fa778" stroke-width="1.2"/></svg>
<span class="t" style="left:2030.52px;top:924px;font-size:17px;color:#666;letter-spacing:0.028px;-webkit-text-stroke:0.3px #666;">cell_towers</span>
<span class="t" style="left:2029.90px;top:960px;font-size:20px;color:#333;font-weight:700;letter-spacing:-0.350px;">Lon</span>
<svg class="b" style="left:2168.0px;top:892.8px;" width="20" height="20" viewBox="0 0 20 20" fill="none"><circle cx="9.5" cy="9.5" r="8.2" stroke="#3fa778" stroke-width="1.4"/><ellipse cx="9.5" cy="9.5" rx="3.6" ry="8.2" stroke="#3fa778" stroke-width="1.3"/><path d="M1.3 9.5h16.4M2.6 5.3h13.8M2.6 13.7h13.8" stroke="#3fa778" stroke-width="1.2"/></svg>
<span class="t" style="left:2156.52px;top:924px;font-size:17px;color:#666;letter-spacing:0.028px;-webkit-text-stroke:0.3px #666;">cell_towers</span>
<span class="t" style="left:2155.90px;top:960px;font-size:20px;color:#333;font-weight:700;letter-spacing:0.650px;">Lat</span>
<div class="b" style="left:1231px;top:1000px;width:1031px;height:321px;overflow:hidden;">
<span class="t" style="left:19.35px;top:12px;font-size:21px;color:#333;letter-spacing:-0.930px;-webkit-text-stroke:0.3px #333;">CDMA</span>
<span class="t" style="left:205.75px;top:12px;font-size:21px;color:#333;letter-spacing:1.110px;-webkit-text-stroke:0.3px #333;">250</span>
<span class="t" style="left:315.02px;top:12px;font-size:21px;color:#333;letter-spacing:0.404px;-webkit-text-stroke:0.3px #333;">1,005</span>
<span class="t" style="left:434.68px;top:12px;font-size:21px;color:#333;letter-spacing:-0.260px;-webkit-text-stroke:0.3px #333;">45,148</span>
<span class="t" style="left:538.35px;top:12px;font-size:21px;color:#333;letter-spacing:0.267px;-webkit-text-stroke:0.3px #333;">25,455.00</span>
<span class="t" style="left:743.25px;top:12px;font-size:21px;color:#333;letter-spacing:-1.500px;-webkit-text-stroke:0.3px #333;">-1</span>
<span class="t" style="left:821.96px;top:12px;font-size:21px;color:#333;letter-spacing:-0.173px;-webkit-text-stroke:0.3px #333;">85.912</span>
<span class="t" style="left:934.96px;top:12px;font-size:21px;color:#333;letter-spacing:-0.037px;-webkit-text-stroke:0.3px #333;">55.3337</span>
<span class="t" style="left:19.35px;top:62px;font-size:21px;color:#333;letter-spacing:-0.930px;-webkit-text-stroke:0.3px #333;">CDMA</span>
<span class="t" style="left:205.75px;top:62px;font-size:21px;color:#333;letter-spacing:1.110px;-webkit-text-stroke:0.3px #333;">250</span>
<span class="t" style="left:315.02px;top:62px;font-size:21px;color:#333;letter-spacing:0.404px;-webkit-text-stroke:0.3px #333;">1,005</span>
<span class="t" style="left:434.68px;top:62px;font-size:21px;color:#333;letter-spacing:-0.260px;-webkit-text-stroke:0.3px #333;">45,148</span>
<span class="t" style="left:538.35px;top:62px;font-size:21px;color:#333;letter-spacing:0.267px;-webkit-text-stroke:0.3px #333;">25,452.00</span>
<span class="t" style="left:743.25px;top:62px;font-size:21px;color:#333;letter-spacing:-1.500px;-webkit-text-stroke:0.3px #333;">-1</span>
<span class="t" style="left:819.46px;top:62px;font-size:21px;color:#333;letter-spacing:0.327px;-webkit-text-stroke:0.3px #333;">85.922</span>
<span class="t" style="left:935.86px;top:62px;font-size:21px;color:#333;letter-spacing:-0.205px;-webkit-text-stroke:0.3px #333;">55.3341</span>
<span class="t" style="left:19.35px;top:111px;font-size:21px;color:#333;letter-spacing:-0.930px;-webkit-text-stroke:0.3px #333;">CDMA</span>
<span class="t" style="left:205.75px;top:111px;font-size:21px;color:#333;letter-spacing:1.110px;-webkit-text-stroke:0.3px #333;">250</span>
<span class="t" style="left:315.02px;top:111px;font-size:21px;color:#333;letter-spacing:0.404px;-webkit-text-stroke:0.3px #333;">1,005</span>
<span class="t" style="left:434.68px;top:111px;font-size:21px;color:#333;letter-spacing:-0.260px;-webkit-text-stroke:0.3px #333;">45,148</span>
<span class="t" style="left:541.65px;top:111px;font-size:21px;color:#333;letter-spacing:-0.146px;-webkit-text-stroke:0.3px #333;">25,451.00</span>
<span class="t" style="left:743.25px;top:111px;font-size:21px;color:#333;letter-spacing:-1.500px;-webkit-text-stroke:0.3px #333;">-1</span>
<span class="t" style="left:823.26px;top:111px;font-size:21px;color:#333;letter-spacing:-0.433px;-webkit-text-stroke:0.3px #333;">85.917</span>
<span class="t" style="left:932.86px;top:111px;font-size:21px;color:#333;letter-spacing:0.278px;-webkit-text-stroke:0.3px #333;">55.3338</span>
<span class="t" style="left:19.35px;top:161px;font-size:21px;color:#333;letter-spacing:-0.930px;-webkit-text-stroke:0.3px #333;">CDMA</span>
<span class="t" style="left:205.75px;top:161px;font-size:21px;color:#333;letter-spacing:1.110px;-webkit-text-stroke:0.3px #333;">250</span>
<span class="t" style="left:315.02px;top:161px;font-size:21px;color:#333;letter-spacing:0.404px;-webkit-text-stroke:0.3px #333;">1,005</span>
<span class="t" style="left:434.68px;top:161px;font-size:21px;color:#333;letter-spacing:-0.260px;-webkit-text-stroke:0.3px #333;">45,148</span>
<span class="t" style="left:538.35px;top:161px;font-size:21px;color:#333;letter-spacing:0.267px;-webkit-text-stroke:0.3px #333;">25,456.00</span>
<span class="t" style="left:743.25px;top:161px;font-size:21px;color:#333;letter-spacing:-1.500px;-webkit-text-stroke:0.3px #333;">-1</span>
<span class="t" style="left:818.56px;top:161px;font-size:21px;color:#333;letter-spacing:0.486px;-webkit-text-stroke:0.3px #333;">85.899</span>
<span class="t" style="left:933.66px;top:161px;font-size:21px;color:#333;letter-spacing:0.144px;-webkit-text-stroke:0.3px #333;">55.3323</span>
<span class="t" style="left:19.35px;top:210px;font-size:21px;color:#333;letter-spacing:-0.930px;-webkit-text-stroke:0.3px #333;">CDMA</span>
<span class="t" style="left:205.75px;top:210px;font-size:21px;color:#333;letter-spacing:1.110px;-webkit-text-stroke:0.3px #333;">250</span>
<span class="t" style="left:315.02px;top:210px;font-size:21px;color:#333;letter-spacing:0.404px;-webkit-text-stroke:0.3px #333;">1,005</span>
<span class="t" style="left:435.06px;top:210px;font-size:21px;color:#333;letter-spacing:-0.336px;-webkit-text-stroke:0.3px #333;">37,205</span>
<span class="t" style="left:544.52px;top:210px;font-size:21px;color:#333;letter-spacing:-0.505px;-webkit-text-stroke:0.3px #333;">19,471.00</span>
<span class="t" style="left:743.25px;top:210px;font-size:21px;color:#333;letter-spacing:-1.500px;-webkit-text-stroke:0.3px #333;">-1</span>
<span class="t" style="left:822.85px;top:210px;font-size:21px;color:#333;letter-spacing:-0.394px;-webkit-text-stroke:0.3px #333;">65.613</span>
<span class="t" style="left:942.86px;top:210px;font-size:21px;color:#333;letter-spacing:-1.354px;-webkit-text-stroke:0.3px #333;">57.1012</span>
<span class="t" style="left:19.35px;top:260px;font-size:21px;color:#333;letter-spacing:-0.930px;-webkit-text-stroke:0.3px #333;">CDMA</span>
<span class="t" style="left:205.75px;top:260px;font-size:21px;color:#333;letter-spacing:1.110px;-webkit-text-stroke:0.3px #333;">250</span>
<span class="t" style="left:315.02px;top:260px;font-size:21px;color:#333;letter-spacing:0.404px;-webkit-text-stroke:0.3px #333;">1,005</span>
<span class="t" style="left:434.86px;top:260px;font-size:21px;color:#333;letter-spacing:-0.338px;-webkit-text-stroke:0.3px #333;">37,204</span>
<span class="t" style="left:546.52px;top:260px;font-size:21px;color:#333;letter-spacing:-0.558px;-webkit-text-stroke:0.3px #333;">19,811.00</span>
<span class="t" style="left:743.25px;top:260px;font-size:21px;color:#333;letter-spacing:-1.500px;-webkit-text-stroke:0.3px #333;">-1</span>
<span class="t" style="left:818.45px;top:260px;font-size:21px;color:#333;letter-spacing:0.486px;-webkit-text-stroke:0.3px #333;">65.568</span>
<span class="t" style="left:942.46px;top:260px;font-size:21px;color:#333;letter-spacing:-1.305px;-webkit-text-stroke:0.3px #333;">57.1749</span>
<span class="t" style="left:19.35px;top:309px;font-size:21px;color:#333;letter-spacing:-0.930px;-webkit-text-stroke:0.3px #333;">CDMA</span>
<span class="t" style="left:205.75px;top:309px;font-size:21px;color:#333;letter-spacing:1.110px;-webkit-text-stroke:0.3px #333;">250</span>
<span class="t" style="left:315.02px;top:309px;font-size:21px;color:#333;letter-spacing:0.404px;-webkit-text-stroke:0.3px #333;">1,005</span>
<span class="t" style="left:434.86px;top:309px;font-size:21px;color:#333;letter-spacing:-0.338px;-webkit-text-stroke:0.3px #333;">37,204</span>
<span class="t" style="left:539.83px;top:309px;font-size:21px;color:#333;letter-spacing:0.082px;-webkit-text-stroke:0.3px #333;">19,863.00</span>
<span class="t" style="left:743.25px;top:309px;font-size:21px;color:#333;letter-spacing:-1.500px;-webkit-text-stroke:0.3px #333;">-1</span>
<span class="t" style="left:818.45px;top:309px;font-size:21px;color:#333;letter-spacing:0.486px;-webkit-text-stroke:0.3px #333;">65.565</span>
<span class="t" style="left:942.26px;top:309px;font-size:21px;color:#333;letter-spacing:-1.289px;-webkit-text-stroke:0.3px #333;">57.1773</span>
</div>
<div class="b" style="left:1231px;top:1321px;width:1017px;height:19px;background:#f8f8f8;"></div>
<div class="b" style="left:1252px;top:1321px;width:452px;height:19px;background:#e0e0e0;"></div>
<div class="b" style="left:0px;top:1340px;width:2277px;height:49px;background:#e6e6e6;border-top:1px solid #c8c8c8;"></div>
<div class="b" style="left:0px;top:1341px;width:206px;height:48px;background:#fafafa;border-right:1px solid #c8c8c8;"></div>
<div class="b" style="left:0px;top:1389px;width:2277px;height:1px;background:#c8c8c8;"></div>
<div class="b" style="left:0px;top:1390px;width:2277px;height:5px;background:#ececec;"></div>
<svg class="b" style="left:15px;top:1353.5px;" width="16" height="19" viewBox="0 0 16 19" fill="none"><ellipse cx="8" cy="4.5" rx="6.2" ry="3" stroke="#333" stroke-width="1.5"/><path d="M1.8 4.5v10c0 1.8 2.8 3 6.2 3s6.2-1.2 6.2-3v-10" stroke="#333" stroke-width="1.5"/></svg>
<span class="t" style="left:39.32px;top:1350px;font-size:21px;color:#666;letter-spacing:-0.233px;-webkit-text-stroke:0.3px #666;">Data Source</span>
<span class="t" style="left:217.36px;top:1350px;font-size:21px;color:#666;letter-spacing:0.228px;-webkit-text-stroke:0.3px #666;">Scratchpad</span>
</div></body></html>
